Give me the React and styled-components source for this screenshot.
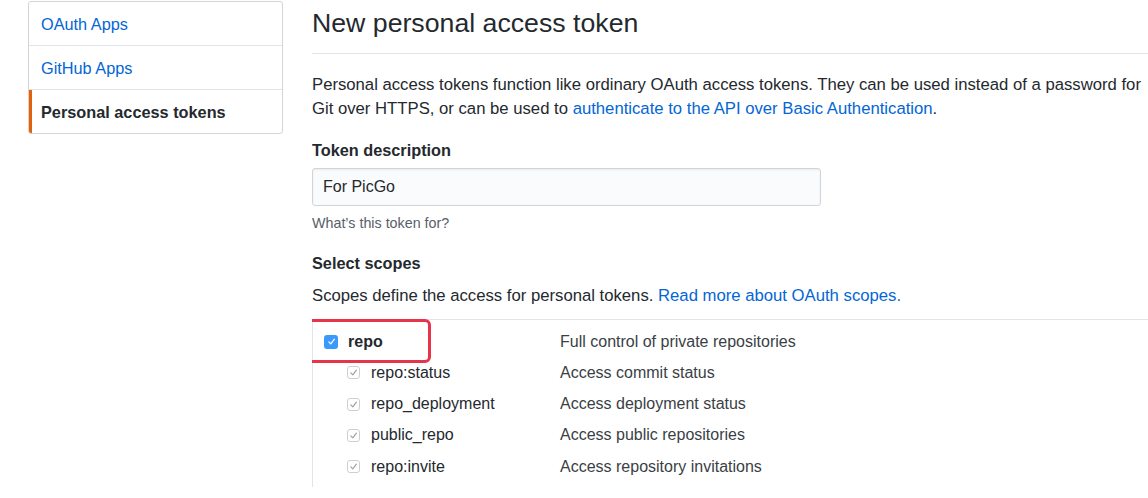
import React from 'react';
import styled, { createGlobalStyle } from 'styled-components';

const GlobalStyle = createGlobalStyle`
  html, body {
    margin: 0;
    padding: 0;
    background: #fff;
  }
  body {
    font-family: "Liberation Sans", Arial, Helvetica, sans-serif;
    color: #24292e;
    font-size: 16px;
  }
  * {
    box-sizing: border-box;
  }
`;

const Page = styled.div`
  display: flex;
  align-items: flex-start;
  width: 1148px;
  height: 498px;
  overflow: hidden;
`;

const SideMenu = styled.nav`
  flex: 0 0 255px;
  margin: 1px 0 0 28px;
  border: 1px solid #d1d5da;
  border-radius: 3px;
  overflow: hidden;
`;

const MenuItem = styled.a`
  display: block;
  height: 44px;
  line-height: 44px;
  padding-left: ${(p) => (p.$active ? '9px' : '12px')};
  border-left: ${(p) => (p.$active ? '3px solid #e36209' : '0')};
  border-bottom: 1px solid #e1e4e8;
  font-size: 16.3px;
  font-weight: ${(p) => (p.$active ? 700 : 400)};
  color: ${(p) => (p.$active ? '#24292e' : '#0366d6')};
  text-decoration: none;
  white-space: nowrap;

  &:last-child {
    border-bottom: 0;
    height: 43px;
  }
`;

const Main = styled.main`
  flex: 1;
  margin-left: 29px;
  padding-top: 1px;
  min-width: 0;
  overflow: hidden;
`;

const Title = styled.h2`
  margin: 0;
  padding-bottom: 8px;
  font-size: 26.7px;
  font-weight: 400;
  line-height: 44px;
  border-bottom: 1px solid #e1e4e8;
  white-space: nowrap;
`;

const Intro = styled.p`
  margin: 19px 0 0;
  font-size: 16.7px;
  line-height: 24px;
  white-space: nowrap;
`;

const Link = styled.a`
  color: #0366d6;
  text-decoration: none;
`;

const Label = styled.div`
  margin-top: ${(p) => p.$gap}px;
  font-size: 16.3px;
  font-weight: 700;
  line-height: 24px;
`;

const TextInput = styled.input`
  display: block;
  width: 509px;
  height: 38px;
  margin-top: 6px;
  padding: 0 10px;
  font-family: inherit;
  font-size: 16px;
  color: #24292e;
  background: #fafbfc;
  border: 1px solid #d1d5da;
  border-radius: 3px;
  box-shadow: inset 0 1px 2px rgba(27, 31, 35, 0.075);
  outline: none;
`;

const Hint = styled.div`
  margin-top: 7px;
  font-size: 14.3px;
  line-height: 20px;
  color: #586069;
`;

const Note = styled.p`
  margin: 9px 0 0;
  font-size: 16.7px;
  line-height: 24px;
  white-space: nowrap;
`;

const ScopeTable = styled.div`
  position: relative;
  margin-top: 11px;
  padding: 6px 0 5px;
  border-top: 1px solid #e1e4e8;
  border-left: 1px solid #e1e4e8;
`;

const Highlight = styled.div`
  position: absolute;
  left: -7px;
  top: -1px;
  width: 125px;
  height: 44px;
  border: 3px solid #e8344b;
  border-radius: 6px;
  pointer-events: none;
`;

const ScopeRow = styled.div`
  display: flex;
  align-items: center;
  height: 31.25px;
`;

const ScopeName = styled.label`
  display: flex;
  align-items: center;
  gap: ${(p) => (p.$child ? 11 : 10)}px;
  flex: 0 0 247px;
  padding-left: ${(p) => (p.$child ? 34 : 11)}px;
  font-size: 16px;
  font-weight: ${(p) => (p.$child ? 400 : 700)};
  white-space: nowrap;
`;

const ScopeDesc = styled.div`
  font-size: 16px;
  color: #3a3f45;
  white-space: nowrap;
`;

const Box = styled.span`
  display: inline-flex;
  align-items: center;
  justify-content: center;
  flex: 0 0 auto;
  width: ${(p) => (p.$child ? 13 : 14)}px;
  height: ${(p) => (p.$child ? 13 : 14)}px;
  border-radius: 3px;
  background: ${(p) => (p.$child ? '#fff' : '#3b99fc')};
  border: ${(p) => (p.$child ? '1px solid #cfcfcf' : '0')};
`;

function Check({ child }) {
  return (
    <Box $child={child}>
      <svg width="9" height="9" viewBox="0 0 10 10">
        <path
          d="M2 5.4 L4.2 7.6 L8.2 2.4"
          fill="none"
          stroke={child ? '#a3a3a3' : '#fff'}
          strokeWidth="1.4"
          strokeLinecap="round"
          strokeLinejoin="round"
        />
      </svg>
    </Box>
  );
}

const scopes = [
  { name: 'repo', desc: 'Full control of private repositories' },
  { name: 'repo:status', desc: 'Access commit status', child: true },
  { name: 'repo_deployment', desc: 'Access deployment status', child: true },
  { name: 'public_repo', desc: 'Access public repositories', child: true },
  { name: 'repo:invite', desc: 'Access repository invitations', child: true },
];

export default function App() {
  return (
    <>
      <GlobalStyle />
      <Page>
        <SideMenu>
          <MenuItem href="#">OAuth Apps</MenuItem>
          <MenuItem href="#">GitHub Apps</MenuItem>
          <MenuItem href="#" $active>
            Personal access tokens
          </MenuItem>
        </SideMenu>

        <Main>
          <Title>New personal access token</Title>
          <Intro>
            Personal access tokens function like ordinary OAuth access tokens. They can be used
            instead of a password for
            <br />
            Git over HTTPS, or can be used to{' '}
            <Link href="#">authenticate to the API over Basic Authentication</Link>.
          </Intro>

          <Label $gap={17}>Token description</Label>
          <TextInput defaultValue="For PicGo" />
          <Hint>What’s this token for?</Hint>

          <Label $gap={18}>Select scopes</Label>
          <Note>
            Scopes define the access for personal tokens.{' '}
            <Link href="#">Read more about OAuth scopes.</Link>
          </Note>

          <ScopeTable>
            <Highlight />
            {scopes.map((s) => (
              <ScopeRow key={s.name}>
                <ScopeName $child={s.child}>
                  <Check child={s.child} />
                  {s.name}
                </ScopeName>
                <ScopeDesc>{s.desc}</ScopeDesc>
              </ScopeRow>
            ))}
          </ScopeTable>
        </Main>
      </Page>
    </>
  );
}
